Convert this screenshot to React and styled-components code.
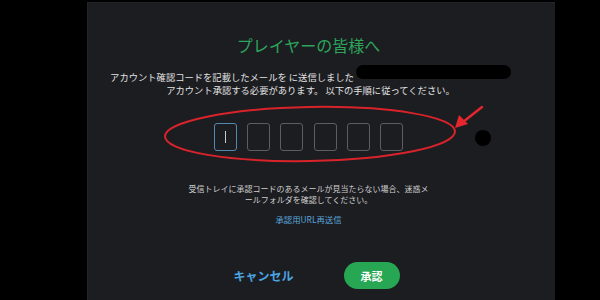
import React from 'react';
import styled, { createGlobalStyle } from 'styled-components';

const GlobalStyle = createGlobalStyle`
  html, body {
    margin: 0;
    padding: 0;
    background: #000;
  }
  body {
    font-family: "Noto Sans CJK JP", "Noto Sans", sans-serif;
  }
`;

const Page = styled.div`
  position: relative;
  width: 600px;
  height: 300px;
  overflow: hidden;
  background: #000;
  display: flex;
  padding-top: 2px;
  box-sizing: border-box;
`;

const Panel = styled.div`
  margin-left: 87px;
  width: 468px;
  height: 298px;
  background: #1c1d21;
  border-left: 1px solid #23242a;
  border-top: 1px solid #23242a;
  box-sizing: border-box;
  display: flex;
  flex-direction: column;
  align-items: center;
  padding: 32px 26px 0 0;
`;

const Title = styled.h1`
  margin: 0;
  font-size: 16px;
  line-height: 20px;
  font-weight: 400;
  color: #2ca55a;
`;

const Message = styled.p`
  margin: 10px 0 0;
  padding-left: 4px;
  font-size: 9.3px;
  line-height: 13px;
  color: #e2e2e2;
  text-align: center;
  white-space: nowrap;
`;

const Redacted = styled.span`
  display: inline-block;
  width: 155px;
  height: 14px;
  margin-left: 2px;
  border-radius: 7px;
  background: #000;
  vertical-align: 2px;
`;

const CodeRow = styled.div`
  display: flex;
  gap: 10.4px;
  margin-top: 26px;
`;

const CodeBox = styled.div`
  width: 23px;
  height: 28px;
  box-sizing: border-box;
  border: 1.5px solid ${p => (p.active ? '#5289b0' : '#5a5d63')};
  border-radius: 3px;
  display: flex;
  align-items: center;
  justify-content: center;
`;

const Caret = styled.span`
  width: 1px;
  height: 12px;
  background: #c9c9c9;
`;

const Hint = styled.p`
  margin: 33px 0 0;
  font-size: 8px;
  line-height: 10.5px;
  color: #cfcfcf;
  text-align: center;
  white-space: nowrap;
`;

const ResendLink = styled.a`
  margin-top: 8px;
  font-size: 8.4px;
  line-height: 12px;
  color: #5aa6dc;
  text-decoration: none;
  cursor: pointer;
`;

const ButtonRow = styled.div`
  display: flex;
  align-items: center;
  gap: 50px;
  margin: 37px 0 0 16px;
`;

const TextButton = styled.button`
  background: none;
  border: 0;
  padding: 0;
  font-family: inherit;
  font-size: 12px;
  font-weight: 700;
  color: #4aa4e0;
  cursor: pointer;
`;

const PrimaryButton = styled.button`
  width: 56px;
  height: 27px;
  border: 0;
  border-radius: 14px;
  background: #27a653;
  color: #fff;
  font-family: inherit;
  font-size: 11px;
  font-weight: 700;
  cursor: pointer;
`;

const Annotations = styled.svg`
  position: absolute;
  left: 0;
  top: 0;
  pointer-events: none;
`;

export default function App() {
  return (
    <>
      <GlobalStyle />
      <Page>
        <Panel>
          <Title>プレイヤーの皆様へ</Title>
          <Message>
            アカウント確認コードを記載したメールを に送信しました<Redacted />
            <br />
            アカウント承認する必要があります。 以下の手順に従ってください。
          </Message>
          <CodeRow>
            {[0, 1, 2, 3, 4, 5].map(i => (
              <CodeBox key={i} active={i === 0}>
                {i === 0 && <Caret />}
              </CodeBox>
            ))}
          </CodeRow>
          <Hint>
            受信トレイに承認コードのあるメールが見当たらない場合、迷惑メ
            <br />
            ールフォルダを確認してください。
          </Hint>
          <ResendLink>承認用URL再送信</ResendLink>
          <ButtonRow>
            <TextButton>キャンセル</TextButton>
            <PrimaryButton>承認</PrimaryButton>
          </ButtonRow>
        </Panel>
        <Annotations width="600" height="300" viewBox="0 0 600 300">
          <ellipse
            cx="310"
            cy="134"
            rx="145"
            ry="27"
            fill="none"
            stroke="#d9232b"
            strokeWidth="2"
            transform="rotate(-1 310 134)"
          />
          <line x1="482" y1="107" x2="463" y2="122" stroke="#e5262d" strokeWidth="2.5" strokeLinecap="round" />
          <polygon points="455,128 459,115 468,124" fill="#e5262d" />
          <circle cx="483" cy="138" r="8" fill="#000" />
        </Annotations>
      </Page>
    </>
  );
}
